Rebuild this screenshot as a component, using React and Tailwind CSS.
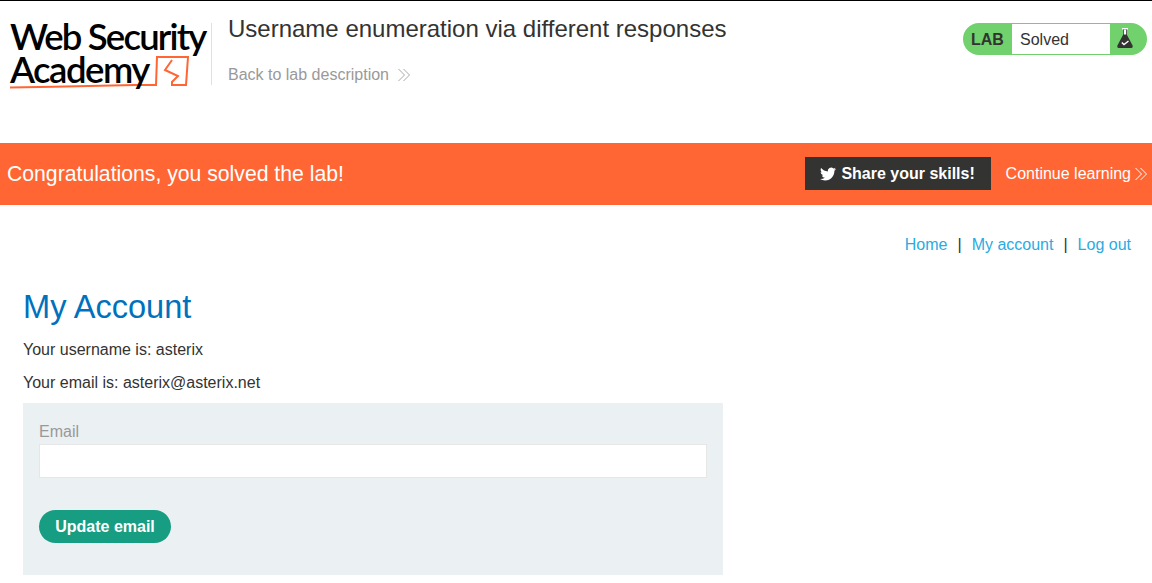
import React from 'react';

const font = { fontFamily: '"Liberation Sans", Arial, sans-serif' };

const Chevrons = ({ className }) => (
  <svg viewBox="0 0 14 14" fill="none" stroke="currentColor" strokeWidth="1" className={className}>
    <path d="M1.5 1 L7.5 7 L1.5 13" />
    <path d="M6.5 1 L12.5 7 L6.5 13" />
  </svg>
);

const Logo = () => (
  <div className="relative w-[200px] h-[72px] text-black font-['Lato',sans-serif] font-semibold">
    <svg viewBox="0 0 200 72" className="absolute left-0 top-0 w-[200px] h-[72px]" fill="none" stroke="#ff6633">
      <path d="M-2 67.5 C 40 67 90 66 125 65 L146 65 L147 37 L178 37 L176 65 L162 65 L162 62 L168 56 L155 50 L162 40" strokeWidth="2" />
    </svg>
    <div className="relative -mt-[3px] text-[36.5px] leading-[33px] tracking-[-1.8px] whitespace-nowrap">Web Security</div>
    <div className="relative text-[36.5px] leading-[33px] tracking-[-1.5px] whitespace-nowrap">Academy</div>
  </div>
);

export default function App() {
  return (
    <div className="bg-white text-[#333332] text-base" style={font}>
      <header className="border-t border-black h-[143px] flex">
        <div className="w-[212px] h-[62px] mt-[22px] pl-[10px] border-r border-[#e0e0e0] shrink-0">
          <Logo />
        </div>
        <div className="pl-4 flex-1">
          <h2 className="text-[24px] leading-[29px] mt-[13px]">Username enumeration via different responses</h2>
          <a className="flex items-center gap-2 mt-[23px] text-[#999] leading-[18px]">
            Back to lab description
            <Chevrons className="w-[14px] h-[14px] text-[#aaa]" />
          </a>
        </div>
        <div className="mt-[22px] mr-[5px] w-[184px] h-[32px] rounded-full bg-[#70d16d] flex items-center shrink-0">
          <span className="w-[49px] pl-2 pt-[2px] font-bold text-[#333332]">LAB</span>
          <span className="w-[98px] h-[30px] bg-white pl-2 leading-[32px]">Solved</span>
          <svg viewBox="0 0 16 20" className="w-[16px] h-[20px] ml-[7px] mb-[2px]">
            <rect x="5" y="0" width="6" height="1.5" fill="#fff" />
            <path d="M6 1.5 H10 V7 L15.6 17.5 Q16.2 20 14 20 H2 Q-0.2 20 0.4 17.5 L6 7 Z" fill="#333332" />
            <path d="M6.8 1.5 H9.2 V6.5 H6.8 Z" fill="#fff" />
            <path d="M4.8 14.5 L7 16.5 L11.5 13" fill="none" stroke="#fff" strokeWidth="1.4" />
          </svg>
        </div>
      </header>

      <div className="h-[62px] bg-[#ff6633] flex items-center text-white pl-[7px] pr-[4px]">
        <h4 className="text-[21.2px] flex-1">Congratulations, you solved the lab!</h4>
        <a className="w-[186px] h-[33px] mb-[1px] bg-[#333332] flex items-center justify-center gap-[5px] font-bold">
          <svg viewBox="0 0 24 24" fill="currentColor" className="w-4 h-4">
            <path d="M23.95 4.57a10 10 0 0 1-2.82.77 4.96 4.96 0 0 0 2.16-2.72c-.95.55-2 .96-3.13 1.18a4.92 4.92 0 0 0-8.38 4.48C7.69 8.1 4.07 6.13 1.64 3.16a4.82 4.82 0 0 0-.67 2.48c0 1.71.87 3.21 2.19 4.1a4.9 4.9 0 0 1-2.23-.62v.06a4.92 4.92 0 0 0 3.95 4.83 5 5 0 0 1-2.21.08 4.94 4.94 0 0 0 4.6 3.42A9.87 9.87 0 0 1 0 19.54a14 14 0 0 0 7.56 2.21c9.05 0 14-7.5 14-13.98 0-.21 0-.42-.02-.63a9.94 9.94 0 0 0 2.41-2.55z" />
          </svg>
          Share your skills!
        </a>
        <a className="ml-[15px] flex items-center gap-[3px]">
          Continue learning
          <Chevrons className="w-[14px] h-[14px]" />
        </a>
      </div>

      <main className="px-[23px]">
        <nav className="flex justify-end items-center pt-[31px] leading-[18px] text-[#29abe2] mr-[-2px]">
          <a>Home</a>
          <span className="text-[#333332] mx-[10px]">|</span>
          <a>My account</a>
          <span className="text-[#333332] mx-[10px]">|</span>
          <a>Log out</a>
        </nav>
        <h1 className="text-[32.6px] leading-[37px] mt-[34px] text-[#0071bc]">My Account</h1>
        <p className="mt-[16px] leading-[18px]">Your username is: asterix</p>
        <p className="mt-[15px] leading-[18px]">Your email is: asterix@asterix.net</p>
        <form className="mt-[11px] w-[700px] h-[172px] bg-[#ebf0f2] px-4 pt-[20px]">
          <label className="block text-[#999] leading-[18px]">Email</label>
          <input className="block w-full h-[34px] mt-[3px] bg-white border border-[#e6e6e6]" />
          <button type="button" className="mt-[32px] w-[132px] h-[33px] rounded-full bg-[#169d82] text-white font-bold">
            Update email
          </button>
        </form>
      </main>
    </div>
  );
}
